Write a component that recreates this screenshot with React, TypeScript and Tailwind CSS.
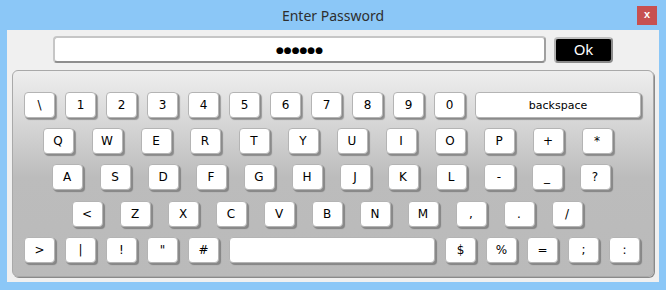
import React from "react";

const row1 = ["\\", "1", "2", "3", "4", "5", "6", "7", "8", "9", "0"];
const row2 = ["Q", "W", "E", "R", "T", "Y", "U", "I", "O", "P", "+", "*"];
const row3 = ["A", "S", "D", "F", "G", "H", "J", "K", "L", "-", "_", "?"];
const row4 = ["<", "Z", "X", "C", "V", "B", "N", "M", ",", ".", "/"];
const row5a = [">", "|", "!", '"', "#"];
const row5b = ["$", "%", "=", ";", ":"];

const Key = ({ label, wide, small }: { label: string; wide?: string; small?: boolean }) => (
  <button
    className={`${wide ?? "w-[31px]"} ${small ? "text-[11px]" : "text-[12px]"} h-[26px] shrink-0 rounded-[4px] bg-white border border-[#b4b4b4] shadow-[1px_1px_0_#8a8a8a,2px_2px_1px_rgba(0,0,0,0.3)] flex items-center justify-center text-black font-['DejaVu_Sans',sans-serif] leading-none`}
  >
    {label}
  </button>
);

const App = () => {
  return (
    <div className="w-[666px] h-[290px] bg-[#8bc7f7] flex flex-col font-['DejaVu_Sans',sans-serif]">
      {/* Title bar */}
      <div className="relative h-[30px] flex items-center justify-center">
        <span className="text-[14px] text-[#2e2e2e] font-['Noto_Sans',sans-serif]">
          Enter Password
        </span>
        <div className="absolute right-[9px] top-[6px] w-[20px] h-[19px] bg-[#c75050] flex items-center justify-center text-white text-[11px] font-bold font-['Liberation_Sans',sans-serif] leading-none pb-[2px]">
          x
        </div>
      </div>

      {/* Client area */}
      <div className="mx-[7px] h-[252px] bg-[#f0f0f0] flex flex-col">
        <div className="flex items-center pt-[6px] pl-[46px] gap-[8px]">
          <div className="w-[493px] h-[27px] bg-white rounded-[4px] border-2 border-[#c6c6c6] border-b-[#8e8e8e] border-r-[#a0a0a0] flex items-center justify-center">
            <span className="text-[9px] leading-none text-black font-['DejaVu_Sans',sans-serif] pt-[1px]">
              ●●●●●●
            </span>
          </div>
          <button className="w-[59px] h-[26px] bg-black rounded-[4px] border-2 border-[#8a8a8a] border-t-[#c0c0c0] border-l-[#b0b0b0] text-white text-[15px] font-['Noto_Sans',sans-serif] flex items-center justify-center leading-none">
            Ok
          </button>
        </div>

        {/* Keyboard panel */}
        <div className="ml-[5px] mt-[7px] w-[642px] h-[207px] rounded-[6px] border border-[#a9a9a9] shadow-[1px_1px_0_#8a8a8a] bg-[linear-gradient(to_bottom,#eeeeee_0%,#d2d2d2_30%,#bcbcbc_52%,#bababa_100%)] pt-[21px] pl-[11px] flex flex-col gap-[10.2px]">
          <div className="flex gap-[10px]">
            {row1.map((k) => (
              <Key key={k} label={k} />
            ))}
            <Key label="backspace" wide="w-[166px]" small />
          </div>
          <div className="flex gap-[18px] ml-[18.5px]">
            {row2.map((k) => (
              <Key key={k} label={k} />
            ))}
          </div>
          <div className="flex gap-[17px] ml-[27.5px]">
            {row3.map((k) => (
              <Key key={k} label={k} />
            ))}
          </div>
          <div className="flex gap-[17px] ml-[47.5px]">
            {row4.map((k) => (
              <Key key={k} label={k} />
            ))}
          </div>
          <div className="flex gap-[10px]">
            {row5a.map((k) => (
              <Key key={k} label={k} />
            ))}
            <Key label="" wide="w-[206px]" />
            {row5b.map((k) => (
              <Key key={k} label={k} />
            ))}
          </div>
        </div>
      </div>
    </div>
  );
};

export default App;
